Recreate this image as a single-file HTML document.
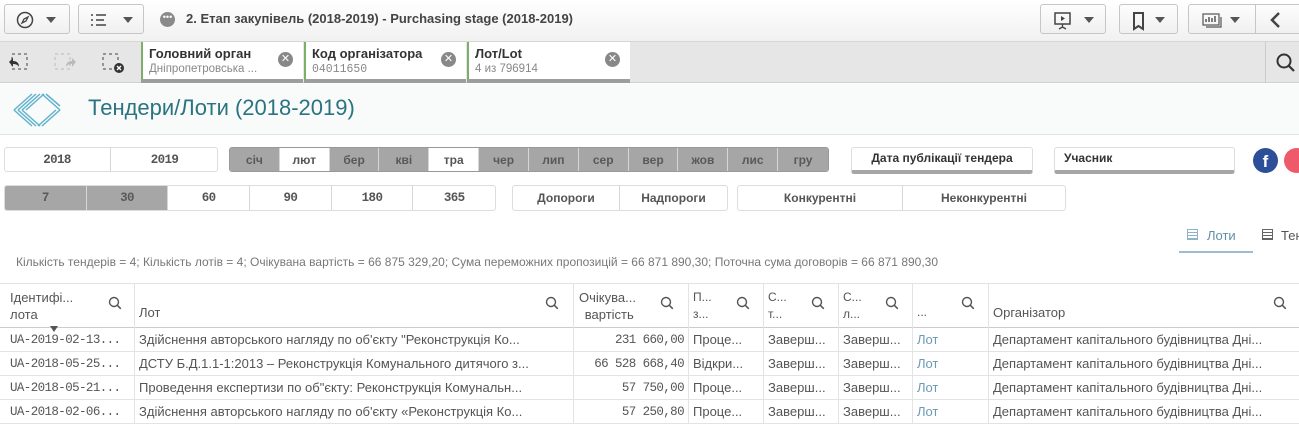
<!DOCTYPE html>
<html><head><meta charset="utf-8"><style>
*{box-sizing:border-box;margin:0;padding:0}
body{width:1299px;height:447px;overflow:hidden;background:#fff;font-family:"Liberation Sans","DejaVu Sans",sans-serif;position:relative;color:#333}
.a{position:absolute}
.btn{position:absolute;border:1px solid #c6c6c6;border-radius:3px;background:linear-gradient(#fdfdfd,#f0f0f0)}
.cell{position:absolute;display:flex;align-items:center;justify-content:center;font-size:12px;font-weight:bold;color:#555;border-right:1px solid #d6d6d6}
.g{background:#a6a6a6;color:#595959}
.th,.td{position:absolute;font-size:13px;white-space:nowrap;overflow:hidden}
.td{color:#555;height:24px;line-height:24px;padding-left:5px}
.mono{font-family:"Liberation Mono",monospace;font-size:12.5px;letter-spacing:-0.6px}
.hl{position:absolute;background:#e3e3e3}
</style></head><body>
<div class="a" style="left:0;top:0;width:1299px;height:42px;background:linear-gradient(#fff,#f1f1f1);border-bottom:1px solid #d6d6d6"></div>
<div class="btn" style="left:4px;top:4px;width:66px;height:30px"><svg class="a" style="left:11px;top:6px" width="18" height="18"><circle cx="9" cy="9" r="7.5" fill="none" stroke="#444" stroke-width="1.5"/><path d="M12 6 L8 8 L6 12 L10 10Z" fill="none" stroke="#444" stroke-width="1.3"/></svg><div class="a" style="left:41px;top:12px;border:5px solid transparent;border-top:6px solid #555"></div></div>
<div class="btn" style="left:78px;top:4px;width:66px;height:30px"><svg class="a" style="left:11px;top:8px" width="20" height="14"><g stroke="#444" stroke-width="1.4"><path d="M1 2h2M6 2h10M1 7h2M6 7h8M1 12h2M6 12h10"/></g></svg><div class="a" style="left:44px;top:12px;border:5px solid transparent;border-top:6px solid #555"></div></div>
<div class="a" style="left:160px;top:12px;width:15px;height:15px;border-radius:50%;background:#8a8a8a;color:#fff;font-size:9px;line-height:10px;text-align:center">•••</div>
<div class="a" style="left:186px;top:11px;font-size:13px;font-weight:bold;color:#444">2. Етап закупівель (2018-2019) - Purchasing stage (2018-2019)</div>
<div class="btn" style="left:1040px;top:4px;width:66px;height:30px"><svg class="a" style="left:12px;top:6px" width="20" height="20"><rect x="2" y="2" width="15" height="11" fill="none" stroke="#444" stroke-width="1.5"/><path d="M8 5l4 2.5-4 2.5z" fill="#444"/><path d="M9.5 13v3M6 18l3.5-2 3.5 2" stroke="#444" fill="none" stroke-width="1.3"/></svg><div class="a" style="left:43px;top:12px;border:5px solid transparent;border-top:6px solid #555"></div></div>
<div class="btn" style="left:1119px;top:4px;width:59px;height:30px"><svg class="a" style="left:12px;top:6px" width="14" height="20"><path d="M2 2h9v16l-4.5-3-4.5 3z" fill="none" stroke="#444" stroke-width="2"/></svg><div class="a" style="left:35px;top:12px;border:5px solid transparent;border-top:6px solid #555"></div></div>
<div class="btn" style="left:1188px;top:4px;width:120px;height:30px"><svg class="a" style="left:13px;top:7px" width="22" height="18"><rect x="1" y="2" width="16" height="11" fill="none" stroke="#555" stroke-width="1.2"/><path d="M4 10V7M7 10V5M10 10V6M13 10V4" stroke="#555" stroke-width="1.5"/><path d="M19 5v10H4" fill="none" stroke="#555" stroke-width="1.2"/></svg><div class="a" style="left:41px;top:12px;border:5px solid transparent;border-top:6px solid #555"></div><div class="a" style="left:66px;top:0;width:1px;height:28px;background:#c6c6c6"></div><svg class="a" style="left:80px;top:6px" width="14" height="18"><path d="M10 2L3 9l7 7" fill="none" stroke="#444" stroke-width="2.5"/></svg></div>
<div class="a" style="left:0;top:42px;width:1299px;height:41px;background:#e6e6e6;border-bottom:1px solid #d0d0d0"></div>
<svg class="a" style="left:6px;top:52px" width="24" height="22"><rect x="6" y="2" width="15" height="15" fill="none" stroke="#444" stroke-dasharray="3 3"/><path d="M3 10l4-4v3c4 0 6 2 6 6-1-2-3-3-6-3v3z" fill="#333"/></svg>
<svg class="a" style="left:52px;top:52px" width="26" height="22"><rect x="3" y="2" width="15" height="15" fill="none" stroke="#bbb" stroke-dasharray="3 3"/><path d="M24 10l-4-4v3c-4 0-6 2-6 6 1-2 3-3 6-3v3z" fill="#bbb"/></svg>
<svg class="a" style="left:101px;top:52px" width="26" height="22"><rect x="2" y="2" width="15" height="15" fill="none" stroke="#444" stroke-dasharray="3 3"/><circle cx="18" cy="16" r="5" fill="#333"/><path d="M16 14l4 4M20 14l-4 4" stroke="#fff" stroke-width="1.4"/></svg>
<div class="a" style="left:141px;top:42px;width:162px;height:41px;background:#fff;border-bottom:4px solid #9d9d9d;border-left:2px solid #7bb06a"><div class="a" style="left:6px;top:4px;font-size:13px;font-weight:bold;color:#333">Головний орган</div><div class="a" style="left:6px;top:21px;font-size:11.5px;color:#888">Дніпропетровська ...</div><div class="a" style="left:135px;top:10px;width:15px;height:15px;border-radius:50%;background:#888;color:#fff;font-size:11px;line-height:15px;text-align:center;font-weight:bold">✕</div></div>
<div class="a" style="left:304px;top:42px;width:162px;height:41px;background:#fff;border-bottom:4px solid #9d9d9d;border-left:2px solid #7bb06a"><div class="a" style="left:6px;top:4px;font-size:13px;font-weight:bold;color:#333">Код організатора</div><div class="a" style="left:6px;top:21px;font-size:11.5px;color:#888;font-family:'Liberation Mono',monospace">04011650</div><div class="a" style="left:135px;top:10px;width:15px;height:15px;border-radius:50%;background:#888;color:#fff;font-size:11px;line-height:15px;text-align:center;font-weight:bold">✕</div></div>
<div class="a" style="left:467px;top:42px;width:163px;height:41px;background:#fff;border-bottom:4px solid #9d9d9d;border-left:2px solid #7bb06a"><div class="a" style="left:6px;top:4px;font-size:13px;font-weight:bold;color:#333">Лот/Lot</div><div class="a" style="left:6px;top:21px;font-size:11.5px;color:#888">4 из 796914</div><div class="a" style="left:136px;top:10px;width:15px;height:15px;border-radius:50%;background:#888;color:#fff;font-size:11px;line-height:15px;text-align:center;font-weight:bold">✕</div></div>
<div class="a" style="left:1265px;top:42px;width:1px;height:41px;background:#ccc"></div>
<svg class="a" style="left:1275px;top:52px" width="22" height="22"><circle cx="9" cy="9" r="6.5" fill="none" stroke="#333" stroke-width="2"/><path d="M13 13l6 6" stroke="#333" stroke-width="2.2"/></svg>
<div class="a" style="left:0;top:84px;width:1299px;height:51px;background:#f9fafa;border-bottom:1px solid #e2e2e2"></div>
<svg class="a" style="left:10px;top:90px" width="54" height="40"><g stroke="#5fb3cc" stroke-width="1.5" fill="none"><path d="M22 4L4 20M26 4L8 20M30 4L12 20M34 4L16 20"/><path d="M4 20l18 16M8 20l18 16M12 20l18 16"/><path d="M32 36l18-16M28 36l18-16"/><path d="M32 4l18 16M36 4l14 12"/></g></svg>
<div class="a" style="left:88px;top:95px;font-size:22px;color:#2a7481">Тендери/Лоти (2018-2019)</div>
<div class="a" style="left:4px;top:147px;width:214px;height:25px;border:1px solid #ddd;border-radius:3px"></div>
<div class="cell mono" style="left:4px;top:148px;width:107px;height:23px;font-weight:bold">2018</div>
<div class="cell mono" style="left:111px;top:148px;width:107px;height:23px;font-weight:bold;border:none">2019</div>
<div class="a" style="left:229px;top:147px;width:600px;height:25px;border-radius:3px;overflow:hidden;border:1px solid #999;display:flex">
<div class="cell g" style="position:static;width:50px">січ</div><div class="cell" style="position:static;width:50px">лют</div><div class="cell g" style="position:static;width:50px">бер</div><div class="cell g" style="position:static;width:50px">кві</div><div class="cell" style="position:static;width:50px">тра</div><div class="cell g" style="position:static;width:50px">чер</div><div class="cell g" style="position:static;width:50px">лип</div><div class="cell g" style="position:static;width:50px">сер</div><div class="cell g" style="position:static;width:50px">вер</div><div class="cell g" style="position:static;width:50px">жов</div><div class="cell g" style="position:static;width:50px">лис</div><div class="cell g" style="position:static;width:50px;border:none">гру</div></div>
<div class="a" style="left:851px;top:147px;width:182px;height:27px;border:1px solid #ddd;border-bottom:4px solid #a6a6a6;border-radius:3px;font-size:12px;font-weight:bold;color:#333;text-align:center;line-height:20px">Дата публікації тендера</div>
<div class="a" style="left:1054px;top:147px;width:181px;height:27px;border:1px solid #ddd;border-bottom:4px solid #a6a6a6;border-radius:3px;font-size:12px;font-weight:bold;color:#333;padding-left:9px;line-height:20px">Учасник</div>
<div class="a" style="left:1253px;top:148px;width:25px;height:25px;border-radius:50%;background:#2c4f97;color:#fff;font-weight:bold;font-size:17px;text-align:center;line-height:27px">f</div>
<div class="a" style="left:1284px;top:148px;width:25px;height:25px;border-radius:50%;background:#ef5a6a"></div>
<div class="a" style="left:4px;top:185px;width:492px;height:26px;border:1px solid #ddd;border-radius:3px;overflow:hidden;display:flex">
<div class="cell g mono" style="position:static;width:82px;font-weight:bold">7</div><div class="cell g mono" style="position:static;width:82px;font-weight:bold">30</div><div class="cell mono" style="position:static;width:82px;font-weight:bold">60</div><div class="cell mono" style="position:static;width:82px;font-weight:bold">90</div><div class="cell mono" style="position:static;width:82px;font-weight:bold">180</div><div class="cell mono" style="position:static;width:82px;font-weight:bold;border:none">365</div></div>
<div class="a" style="left:512px;top:185px;width:216px;height:26px;border:1px solid #ddd;border-radius:3px;display:flex"><div class="cell" style="position:static;width:107px">Допороги</div><div class="cell" style="position:static;width:107px;border:none">Надпороги</div></div>
<div class="a" style="left:737px;top:185px;width:329px;height:26px;border:1px solid #ddd;border-radius:3px;display:flex"><div class="cell" style="position:static;width:165px">Конкурентні</div><div class="cell" style="position:static;width:162px;border:none">Неконкурентні</div></div>
<div class="a" style="left:1187px;top:229px;width:11px;height:11px;border:1px solid #8fb3c7;background:repeating-linear-gradient(#fff 0 2px,#8fb3c7 2px 3px)"></div>
<div class="a" style="left:1207px;top:228px;font-size:13px;color:#5f8fa8">Лоти</div>
<div class="a" style="left:1179px;top:251px;width:74px;height:2px;background:#9fbccc"></div>
<div class="a" style="left:1262px;top:229px;width:11px;height:11px;border:1px solid #666;background:repeating-linear-gradient(#fff 0 2px,#666 2px 3px)"></div>
<div class="a" style="left:1281px;top:228px;font-size:13px;color:#555">Тен</div>
<div class="a" style="left:16px;top:255px;font-size:12px;color:#777">Кількість тендерів = 4; Кількість лотів = 4; Очікувана вартість = 66 875 329,20; Сума переможних пропозицій = 66 871 890,30; Поточна сума договорів = 66 871 890,30</div>
<div class="hl" style="left:0;top:283px;width:1299px;height:1px"></div>
<div class="hl" style="left:0;top:327px;width:1299px;height:1px;background:#ccc"></div>
<div class="hl" style="left:0;top:351px;width:1299px;height:1px"></div>
<div class="hl" style="left:0;top:375px;width:1299px;height:1px"></div>
<div class="hl" style="left:0;top:399px;width:1299px;height:1px"></div>
<div class="hl" style="left:0;top:423px;width:1299px;height:1px"></div>
<div class="hl" style="left:134px;top:283px;width:1px;height:141px"></div>
<div class="hl" style="left:573px;top:283px;width:1px;height:141px"></div>
<div class="hl" style="left:688px;top:283px;width:1px;height:141px"></div>
<div class="hl" style="left:763px;top:283px;width:1px;height:141px"></div>
<div class="hl" style="left:838px;top:283px;width:1px;height:141px"></div>
<div class="hl" style="left:912px;top:283px;width:1px;height:141px"></div>
<div class="hl" style="left:988px;top:283px;width:1px;height:141px"></div>
<div class="th" style="left:10px;top:289px;color:#555;line-height:17px">Ідентифі...<br>лота</div>
<div class="th" style="left:139px;top:305px;color:#555">Лот</div>
<div class="th" style="left:579px;top:289px;color:#555;line-height:17px;text-align:center">Очікува...<br>&nbsp;вартість</div>
<div class="th" style="left:693px;top:289px;color:#555;line-height:17px;font-size:12px">П...<br>з...</div>
<div class="th" style="left:768px;top:289px;color:#555;line-height:17px;font-size:12px">С...<br>т...</div>
<div class="th" style="left:843px;top:289px;color:#555;line-height:17px;font-size:12px">С...<br>л...</div>
<div class="th" style="left:917px;top:305px;color:#555;font-size:12px">...</div>
<div class="th" style="left:993px;top:305px;color:#555">Організатор</div>
<svg width="0" height="0" style="position:absolute"><defs><g id="q"><circle cx="6" cy="6" r="4.5" fill="none" stroke="#555" stroke-width="1.4"/><path d="M9.3 9.3l3.5 3.5" stroke="#555" stroke-width="1.5"/></g></defs></svg>
<svg class="a" style="left:108px;top:296px" width="14" height="14"><use href="#q"/></svg>
<svg class="a" style="left:545px;top:296px" width="14" height="14"><use href="#q"/></svg>
<svg class="a" style="left:660px;top:296px" width="14" height="14"><use href="#q"/></svg>
<svg class="a" style="left:736px;top:296px" width="14" height="14"><use href="#q"/></svg>
<svg class="a" style="left:811px;top:296px" width="14" height="14"><use href="#q"/></svg>
<svg class="a" style="left:885px;top:296px" width="14" height="14"><use href="#q"/></svg>
<svg class="a" style="left:961px;top:296px" width="14" height="14"><use href="#q"/></svg>
<svg class="a" style="left:1273px;top:296px" width="14" height="14"><use href="#q"/></svg>
<div class="a" style="left:50px;top:326px;border:4px solid transparent;border-top:6px solid #555"></div>
<div class="td mono" style="left:5px;top:328px;width:129px">UA-2019-02-13...</div>
<div class="td mono" style="left:5px;top:352px;width:129px">UA-2018-05-25...</div>
<div class="td mono" style="left:5px;top:376px;width:129px">UA-2018-05-21...</div>
<div class="td mono" style="left:5px;top:400px;width:129px">UA-2018-02-06...</div>
<div class="td" style="left:134px;top:328px">Здійснення авторського нагляду по об'єкту "Реконструкція Ко...</div>
<div class="td" style="left:134px;top:352px">ДСТУ Б.Д.1.1-1:2013 – Реконструкція Комунального дитячого з...</div>
<div class="td" style="left:134px;top:376px">Проведення експертизи по об"єкту: Реконструкція Комунальн...</div>
<div class="td" style="left:134px;top:400px">Здійснення авторського нагляду по об'єкту «Реконструкція Ко...</div>
<div class="td mono" style="left:573px;top:328px;width:111px;text-align:right">231 660,00</div>
<div class="td mono" style="left:573px;top:352px;width:111px;text-align:right">66 528 668,40</div>
<div class="td mono" style="left:573px;top:376px;width:111px;text-align:right">57 750,00</div>
<div class="td mono" style="left:573px;top:400px;width:111px;text-align:right">57 250,80</div>
<div class="td" style="left:688px;top:328px">Проце...</div><div class="td" style="left:688px;top:352px">Відкри...</div><div class="td" style="left:688px;top:376px">Проце...</div><div class="td" style="left:688px;top:400px">Проце...</div>
<div class="td" style="left:763px;top:328px">Заверш...</div><div class="td" style="left:763px;top:352px">Заверш...</div><div class="td" style="left:763px;top:376px">Заверш...</div><div class="td" style="left:763px;top:400px">Заверш...</div>
<div class="td" style="left:838px;top:328px">Заверш...</div><div class="td" style="left:838px;top:352px">Заверш...</div><div class="td" style="left:838px;top:376px">Заверш...</div><div class="td" style="left:838px;top:400px">Заверш...</div>
<div class="td" style="left:912px;top:328px;color:#6a9ab5">Лот</div><div class="td" style="left:912px;top:352px;color:#6a9ab5">Лот</div><div class="td" style="left:912px;top:376px;color:#6a9ab5">Лот</div><div class="td" style="left:912px;top:400px;color:#6a9ab5">Лот</div>
<div class="td" style="left:988px;top:328px">Департамент капітального будівництва Дні...</div>
<div class="td" style="left:988px;top:352px">Департамент капітального будівництва Дні...</div>
<div class="td" style="left:988px;top:376px">Департамент капітального будівництва Дні...</div>
<div class="td" style="left:988px;top:400px">Департамент капітального будівництва Дні...</div>
</body></html>
